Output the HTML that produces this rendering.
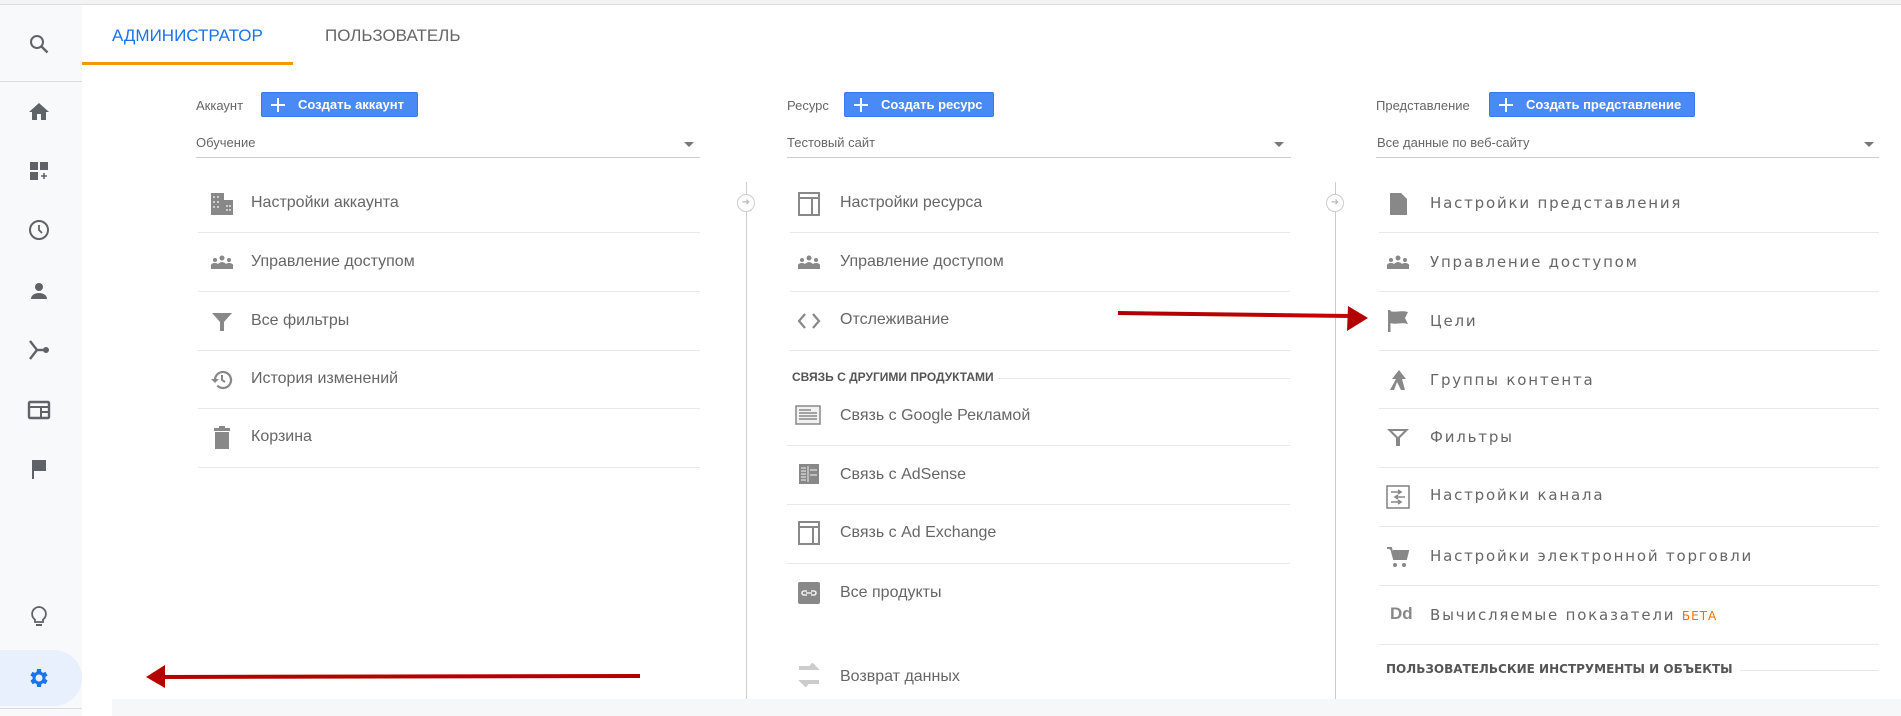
<!DOCTYPE html>
<html><head><meta charset="utf-8">
<style>
*{margin:0;padding:0;box-sizing:border-box}
body{width:1901px;height:716px;overflow:hidden;background:#fff;font-family:"Liberation Sans",sans-serif;position:relative;color:#5f6368}
.a{position:absolute}
.side{left:0;top:5px;width:82px;height:711px;background:#f8f9fa}
.ic{position:absolute;left:27px;width:24px;height:24px}
.t{position:absolute;font-size:16px;color:#666;white-space:nowrap}
.c3{font-family:"DejaVu Sans",sans-serif;font-size:15px;letter-spacing:1.8px;color:#666}
.sep{position:absolute;height:1px;background:#e8e8e8}
.btn{position:absolute;height:25px;background:#4a8af4;border:1px solid #3b78e7;border-radius:2px;color:#fff;font-weight:bold;font-size:13px;line-height:23px;padding-left:36px;white-space:nowrap}
.btn:before{content:"";position:absolute;left:9px;top:5px;width:14px;height:14px;background:linear-gradient(#fff,#fff) center/14px 2px no-repeat,linear-gradient(#fff,#fff) center/2px 14px no-repeat}
.lbl{position:absolute;font-size:13px;color:#666}
.dd{position:absolute;font-size:13px;color:#666}
.ul{position:absolute;height:1px;background:#ccc}
.tri{position:absolute;width:0;height:0;border-left:5px solid transparent;border-right:5px solid transparent;border-top:5px solid #777}
.vl{position:absolute;width:1px;background:#ccc;top:182px;height:518px}
.circ{position:absolute;width:18px;height:18px;border:1.5px solid #ccc;border-radius:50%;background:#fff;color:#bbb;font-size:10px;line-height:15px;text-align:center}
.ii{position:absolute;width:24px;height:24px}
.hd{position:absolute;font-size:12px;font-weight:bold;color:#555;white-space:nowrap}
</style></head><body>
<div class="a" style="left:0;top:0;width:1901px;height:5px;background:#f3f3f3;border-bottom:1px solid #ddd"></div>
<div class="a side"></div>
<div class="a" style="left:0;top:81px;width:82px;height:1px;background:#ddd"></div>
<svg class="ic" style="top:32px" viewBox="0 0 24 24"><circle cx="10" cy="10" r="6" fill="none" stroke="#5f6368" stroke-width="2"/><path d="M14.5 14.5l6 6" stroke="#5f6368" stroke-width="2.4"/></svg>
<svg class="ic" style="top:100px" viewBox="0 0 24 24"><path d="M10 20v-6h4v6h5v-8h3L12 3 2 12h3v8z" fill="#5f6368"/></svg>
<svg class="ic" style="top:159px" viewBox="0 0 24 24"><path d="M3 3h8v8H3zM13 3h8v8h-8zM3 13h8v8H3z" fill="#5f6368"/><path d="M17 14v6M14 17h6" stroke="#5f6368" stroke-width="1.6"/></svg>
<svg class="ic" style="top:218px" viewBox="0 0 24 24"><circle cx="12" cy="12" r="9" fill="none" stroke="#5f6368" stroke-width="2"/><path d="M12 7v5l3 3" fill="none" stroke="#5f6368" stroke-width="1.8"/></svg>
<svg class="ic" style="top:279px" viewBox="0 0 24 24"><circle cx="12" cy="8" r="4" fill="#5f6368"/><path d="M4 20c0-4 4-6 8-6s8 2 8 6z" fill="#5f6368"/></svg>
<svg class="ic" style="top:338px" viewBox="0 0 24 24"><path d="M3 3l7 9-7 9" fill="none" stroke="#5f6368" stroke-width="2.4"/><path d="M10 12h8" stroke="#5f6368" stroke-width="2.4"/><circle cx="19" cy="12" r="3" fill="#5f6368"/></svg>
<svg class="ic" style="top:398px" viewBox="0 0 24 24"><rect x="2" y="4" width="20" height="16" rx="1" fill="none" stroke="#5f6368" stroke-width="2.4"/><path d="M2 9h20M14 9v11M14 14h8" stroke="#5f6368" stroke-width="2"/></svg>
<svg class="ic" style="top:457px" viewBox="0 0 24 24"><path d="M5 3h2v19H5z" fill="#5f6368"/><path d="M7 3h12v11H7z" fill="#5f6368"/></svg>
<svg class="ic" style="top:605px" viewBox="0 0 24 24"><path d="M12 2a7 7 0 0 0-4 12.7V17h8v-2.3A7 7 0 0 0 12 2z" fill="none" stroke="#5f6368" stroke-width="1.8"/><path d="M9 20h6" stroke="#5f6368" stroke-width="2"/></svg>
<div class="a" style="left:0;top:650px;width:82px;height:56px;background:#e8f0fe;border-radius:0 28px 28px 0"></div>
<svg class="ic" style="top:666px" viewBox="0 0 24 24"><path fill="#1a73e8" d="M19.4 13a7.5 7.5 0 0 0 0-2l2.1-1.6-2-3.5-2.5 1a7 7 0 0 0-1.7-1L15 3h-4l-.4 2.9a7 7 0 0 0-1.7 1l-2.5-1-2 3.5L6.6 11a7.5 7.5 0 0 0 0 2l-2.1 1.6 2 3.5 2.5-1a7 7 0 0 0 1.7 1L11 21h4l.4-2.9a7 7 0 0 0 1.7-1l2.5 1 2-3.5zM13 15.5a3.5 3.5 0 1 1 0-7 3.5 3.5 0 0 1 0 7z" transform="translate(-1 0)"/></svg>
<div class="a" style="left:0;top:708px;width:82px;height:1px;background:#ddd"></div>

<div class="a" style="left:112px;top:26px;font-size:17px;color:#1a73e8">АДМИНИСТРАТОР</div>
<div class="a" style="left:325px;top:26px;font-size:17px;color:#666">ПОЛЬЗОВАТЕЛЬ</div>
<div class="a" style="left:82px;top:62px;width:211px;height:3px;background:#f29900"></div>

<div class="lbl" style="left:196px;top:98px">Аккаунт</div>
<div class="btn" style="left:261px;top:92px;width:157px">Создать аккаунт</div>
<div class="dd" style="left:196px;top:135px">Обучение</div>
<div class="tri" style="left:684px;top:142px"></div>
<div class="ul" style="left:196px;top:157px;width:504px"></div>

<svg class="ii" style="left:210px;top:192px" viewBox="0 0 24 24"><path d="M1 1h13v7h9v15H1z" fill="#888"/><g fill="#ccc"><rect x="3" y="4" width="2" height="2"/><rect x="7" y="4" width="2" height="2"/><rect x="3" y="9" width="2" height="2"/><rect x="7" y="9" width="2" height="2"/><rect x="3" y="14" width="2" height="2"/><rect x="7" y="14" width="2" height="2"/><rect x="16" y="13" width="2" height="2"/><rect x="19" y="13" width="2" height="2"/><rect x="16" y="17" width="2" height="2"/><rect x="19" y="17" width="2" height="2"/></g></svg>
<div class="t" style="left:251px;top:194px">Настройки аккаунта</div>
<div class="sep" style="left:198px;top:232px;width:502px"></div>
<svg class="ii" style="left:210px;top:251px" viewBox="0 0 24 24"><g fill="#888"><circle cx="5" cy="9" r="2"/><circle cx="12" cy="7" r="2.5"/><circle cx="19" cy="9" r="2"/><path d="M1 18v-4c0-1 2-2 4-2s3 1 3 1 2-2 4-2 4 2 4 2 1-1 3-1 4 1 4 2v4z"/></g></svg>
<div class="t" style="left:251px;top:253px">Управление доступом</div>
<div class="sep" style="left:198px;top:291px;width:502px"></div>
<svg class="ii" style="left:210px;top:310px" viewBox="0 0 24 24"><path d="M2 3h20l-8 9v9h-4v-9z" fill="#888"/></svg>
<div class="t" style="left:251px;top:312px">Все фильтры</div>
<div class="sep" style="left:198px;top:350px;width:502px"></div>
<svg class="ii" style="left:210px;top:368px" viewBox="0 0 24 24"><path d="M5 12a8 8 0 1 1 2.3 5.6" fill="none" stroke="#888" stroke-width="2.2"/><path d="M1 11h8l-4 4z" fill="#888"/><path d="M12 7v5l3 2" fill="none" stroke="#888" stroke-width="2"/></svg>
<div class="t" style="left:251px;top:370px">История изменений</div>
<div class="sep" style="left:198px;top:408px;width:502px"></div>
<svg class="ii" style="left:210px;top:425px" viewBox="0 0 24 24"><path d="M4 3h16v3H4zM9 1h6v2H9zM5 7h14v17H5z" fill="#888"/></svg>
<div class="t" style="left:251px;top:428px">Корзина</div>
<div class="sep" style="left:198px;top:467px;width:502px"></div>

<div class="vl" style="left:746px"></div>
<div class="circ" style="left:737px;top:194px">➜</div>
<div class="lbl" style="left:787px;top:98px">Ресурс</div>
<div class="btn" style="left:844px;top:92px;width:150px">Создать ресурс</div>
<div class="dd" style="left:787px;top:135px">Тестовый сайт</div>
<div class="tri" style="left:1274px;top:142px"></div>
<div class="ul" style="left:787px;top:157px;width:504px"></div>

<svg class="ii" style="left:797px;top:192px" viewBox="0 0 24 24"><rect x="2" y="1" width="20" height="22" fill="none" stroke="#888" stroke-width="2"/><path d="M2 6h20M15 6v17" stroke="#888" stroke-width="2"/></svg>
<div class="t" style="left:840px;top:194px">Настройки ресурса</div>
<div class="sep" style="left:790px;top:232px;width:500px"></div>
<svg class="ii" style="left:797px;top:251px" viewBox="0 0 24 24"><g fill="#888"><circle cx="5" cy="9" r="2"/><circle cx="12" cy="7" r="2.5"/><circle cx="19" cy="9" r="2"/><path d="M1 18v-4c0-1 2-2 4-2s3 1 3 1 2-2 4-2 4 2 4 2 1-1 3-1 4 1 4 2v4z"/></g></svg>
<div class="t" style="left:840px;top:253px">Управление доступом</div>
<div class="sep" style="left:790px;top:291px;width:500px"></div>
<svg class="ii" style="left:797px;top:309px" viewBox="0 0 24 24"><path d="M8 5l-6 7 6 7M16 5l6 7-6 7" fill="none" stroke="#888" stroke-width="2.2"/></svg>
<div class="t" style="left:840px;top:311px">Отслеживание</div>
<div class="sep" style="left:790px;top:350px;width:500px"></div>
<div class="hd" style="left:792px;top:370px">СВЯЗЬ С ДРУГИМИ ПРОДУКТАМИ</div>
<div class="sep" style="left:998px;top:378px;width:292px"></div>
<svg class="ii" style="left:795px;top:403px;width:26px" viewBox="0 0 26 24"><rect x="1" y="3" width="24" height="18" fill="#f2f2f2" stroke="#888" stroke-width="1.5"/><g stroke="#888" stroke-width="1.5"><path d="M4 7h12M4 10h18M4 13h18M4 16h18"/></g></svg>
<div class="t" style="left:840px;top:407px">Связь с Google Рекламой</div>
<div class="sep" style="left:787px;top:445px;width:503px"></div>
<svg class="ii" style="left:797px;top:462px" viewBox="0 0 24 24"><rect x="2" y="2" width="20" height="20" fill="#888"/><path d="M11 4v16M13 8h7M13 13h7M4 6h5M4 9h5M4 12h5M4 15h5M4 18h5" stroke="#ddd" stroke-width="1.2"/></svg>
<div class="t" style="left:840px;top:466px">Связь с AdSense</div>
<div class="sep" style="left:787px;top:504px;width:503px"></div>
<svg class="ii" style="left:797px;top:521px" viewBox="0 0 24 24"><rect x="2" y="1" width="20" height="22" fill="none" stroke="#888" stroke-width="2"/><path d="M2 6h20M16 6v17" stroke="#888" stroke-width="2"/></svg>
<div class="t" style="left:840px;top:524px">Связь с Ad Exchange</div>
<div class="sep" style="left:787px;top:563px;width:503px"></div>
<svg class="ii" style="left:797px;top:581px" viewBox="0 0 24 24"><rect x="1" y="1" width="22" height="22" rx="2" fill="#888"/><path d="M10 10H7a2 2 0 0 0 0 4h3M14 10h3a2 2 0 0 1 0 4h-3M9 12h6" fill="none" stroke="#eee" stroke-width="1.6"/></svg>
<div class="t" style="left:840px;top:584px">Все продукты</div>
<svg class="ii" style="left:795px;top:660px;width:28px;height:30px" viewBox="0 0 28 30"><path d="M4 8h16l-4-4M24 22H8l4 4" fill="none" stroke="#ccc" stroke-width="4"/></svg>
<div class="t" style="left:840px;top:668px">Возврат данных</div>

<div class="vl" style="left:1335px"></div>
<div class="circ" style="left:1326px;top:194px">➜</div>
<div class="lbl" style="left:1376px;top:98px">Представление</div>
<div class="btn" style="left:1489px;top:92px;width:206px">Создать представление</div>
<div class="dd" style="left:1377px;top:135px">Все данные по веб-сайту</div>
<div class="tri" style="left:1864px;top:142px"></div>
<div class="ul" style="left:1376px;top:157px;width:503px"></div>

<svg class="ii" style="left:1386px;top:192px" viewBox="0 0 24 24"><path d="M4 1h11l6 6v16H4z" fill="#888"/></svg>
<div class="t c3" style="left:1430px;top:194px">Настройки представления</div>
<div class="sep" style="left:1379px;top:232px;width:500px"></div>
<svg class="ii" style="left:1386px;top:251px" viewBox="0 0 24 24"><g fill="#888"><circle cx="5" cy="9" r="2"/><circle cx="12" cy="7" r="2.5"/><circle cx="19" cy="9" r="2"/><path d="M1 18v-4c0-1 2-2 4-2s3 1 3 1 2-2 4-2 4 2 4 2 1-1 3-1 4 1 4 2v4z"/></g></svg>
<div class="t c3" style="left:1430px;top:253px">Управление доступом</div>
<div class="sep" style="left:1379px;top:291px;width:500px"></div>
<svg class="ii" style="left:1386px;top:309px" viewBox="0 0 24 24"><path d="M2 1h2.5v22H2z" fill="#888"/><path d="M4 2c6 2 10-1 18 1l-3 6 3 6c-8-2-12 1-18-1z" fill="#888"/></svg>
<div class="t c3" style="left:1430px;top:312px">Цели</div>
<div class="sep" style="left:1379px;top:350px;width:500px"></div>
<svg class="ii" style="left:1386px;top:368px" viewBox="0 0 24 24"><path d="M4 22l6-11-4 0 7-9 7 9h-4l3 11h-4l-4-8-3 8z" fill="#888"/></svg>
<div class="t c3" style="left:1430px;top:371px">Группы контента</div>
<div class="sep" style="left:1379px;top:408px;width:500px"></div>
<svg class="ii" style="left:1386px;top:426px" viewBox="0 0 24 24"><path d="M1 3h22l-9 9v8h-4v-8z" fill="#888"/><path d="M6 5h12l-6 6z" fill="#fff"/></svg>
<div class="t c3" style="left:1430px;top:428px">Фильтры</div>
<div class="sep" style="left:1379px;top:467px;width:500px"></div>
<svg class="ii" style="left:1386px;top:485px" viewBox="0 0 24 24"><rect x="1" y="1" width="22" height="22" fill="none" stroke="#888" stroke-width="1.6"/><path d="M5 7h10M12 5l3 2-3 2M19 12H9M12 10l-3 2 3 2M5 17h10M12 15l3 2-3 2" fill="none" stroke="#888" stroke-width="1.6"/></svg>
<div class="t c3" style="left:1430px;top:486px">Настройки канала</div>
<div class="sep" style="left:1379px;top:526px;width:500px"></div>
<svg class="ii" style="left:1386px;top:545px" viewBox="0 0 24 24"><path d="M1 3h4l3 11h12l2-8H7" fill="#888" stroke="#888" stroke-width="2"/><circle cx="9" cy="20" r="2" fill="#888"/><circle cx="18" cy="20" r="2" fill="#888"/></svg>
<div class="t c3" style="left:1430px;top:547px">Настройки электронной торговли</div>
<div class="sep" style="left:1379px;top:585px;width:500px"></div>
<div class="a" style="left:1390px;top:604px;font-size:17px;font-weight:bold;color:#888">Dd</div>
<div class="t c3" style="left:1430px;top:606px">Вычисляемые показатели <span style="color:#e8710a;font-size:12px;letter-spacing:1px">БЕТА</span></div>
<div class="sep" style="left:1379px;top:644px;width:500px"></div>
<div class="hd" style="left:1386px;top:662px;font-family:'DejaVu Sans',sans-serif;font-size:12px;color:#555">ПОЛЬЗОВАТЕЛЬСКИЕ ИНСТРУМЕНТЫ И ОБЪЕКТЫ</div>
<div class="sep" style="left:1740px;top:670px;width:139px"></div>

<div class="a" style="left:112px;top:699px;width:1789px;height:17px;background:#f6f7f9"></div>

<svg class="a" style="left:0;top:0" width="1901" height="716"><defs><linearGradient id="g" x1="0" x2="1"><stop offset="0" stop-color="#a00"/><stop offset="1" stop-color="#c00"/></linearGradient></defs>
<path d="M1118 313L1350 316" stroke="url(#g)" stroke-width="4"/><path d="M1348 306L1368 318 1347 331z" fill="#b50000"/>
<path d="M640 676L160 677" stroke="#b50000" stroke-width="4"/><path d="M165 665L146 677 165 688z" fill="#b50000"/>
</svg>
</body></html>
